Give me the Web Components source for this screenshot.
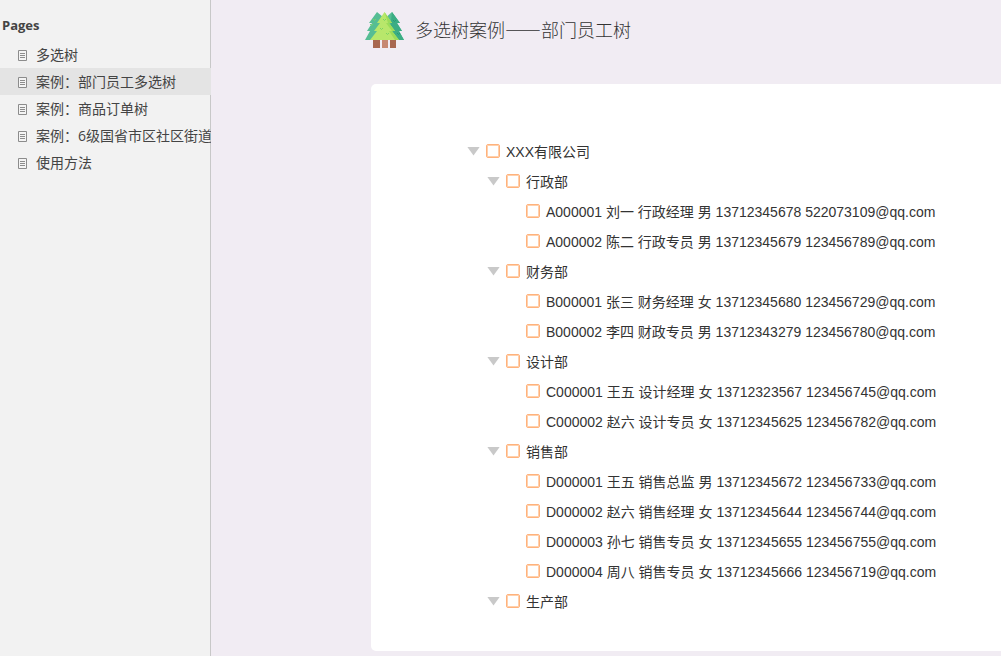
<!DOCTYPE html>
<html lang="zh-CN">
<head>
<meta charset="utf-8">
<meta name="viewport" content="width=device-width, initial-scale=1">
<title>多选树案例</title>
<style>
  body { margin: 0; color: #333; font: 14px/20px "Liberation Sans", "Noto Sans CJK SC", sans-serif; }
</style>
</head>
<body>
<app-shell>
  <page-list slot="nav" heading="Pages">
    <page-link>多选树</page-link>
    <page-link selected>案例：部门员工多选树</page-link>
    <page-link>案例：商品订单树</page-link>
    <page-link>案例：6级国省市区社区街道</page-link>
    <page-link>使用方法</page-link>
  </page-list>
  <page-header>多选树案例——部门员工树</page-header>
  <tree-card>
    <tree-node label="XXX有限公司">
      <tree-node label="行政部">
        <tree-node leaf label="A000001 刘一 行政经理 男 13712345678 522073109@qq.com"></tree-node>
        <tree-node leaf label="A000002 陈二 行政专员 男 13712345679 123456789@qq.com"></tree-node>
      </tree-node>
      <tree-node label="财务部">
        <tree-node leaf label="B000001 张三 财务经理 女 13712345680 123456729@qq.com"></tree-node>
        <tree-node leaf label="B000002 李四 财政专员 男 13712343279 123456780@qq.com"></tree-node>
      </tree-node>
      <tree-node label="设计部">
        <tree-node leaf label="C000001 王五 设计经理 女 13712323567 123456745@qq.com"></tree-node>
        <tree-node leaf label="C000002 赵六 设计专员 女 13712345625 123456782@qq.com"></tree-node>
      </tree-node>
      <tree-node label="销售部">
        <tree-node leaf label="D000001 王五 销售总监 男 13712345672 123456733@qq.com"></tree-node>
        <tree-node leaf label="D000002 赵六 销售经理 女 13712345644 123456744@qq.com"></tree-node>
        <tree-node leaf label="D000003 孙七 销售专员 女 13712345655 123456755@qq.com"></tree-node>
        <tree-node leaf label="D000004 周八 销售专员 女 13712345666 123456719@qq.com"></tree-node>
      </tree-node>
      <tree-node label="生产部"></tree-node>
    </tree-node>
  </tree-card>
</app-shell>

<template id="app-shell">
  <style>
    :host { display: grid; grid-template-columns: 211px minmax(0, 1fr); min-height: 100vh; background: #f1ecf3; }
    aside { box-sizing: border-box; min-width: 0; background: #f2f2f2; border-right: 1px solid #c8c8c8; }
    main { min-width: 0; overflow: hidden; padding: 0 0 5px 160px; }
  </style>
  <aside><slot name="nav"></slot></aside>
  <main><slot></slot></main>
</template>

<template id="page-list">
  <style>
    :host { display: block; padding-top: 10px; color: #444; }
    h2 { margin: 0 0 1px 2px; font: bold 13px/30px "Open Sans", sans-serif; }
    nav { margin-right: -1px; }
  </style>
  <h2></h2>
  <nav><slot></slot></nav>
</template>

<template id="page-link">
  <style>
    :host { display: block; font-family: "Open Sans", "Noto Sans CJK SC", sans-serif; }
    a { display: flex; align-items: center; gap: 9px; height: 27px; padding-left: 18px; color: inherit; text-decoration: none; white-space: nowrap; overflow: hidden; }
    :host([selected]) a { background: #e4e4e4; }
    svg { flex: none; }
  </style>
  <a href="#">
    <svg width="9" height="13" viewBox="0 -2 9 13" aria-hidden="true">
      <path d="M.5.5h8v10h-8z" fill="#f4f4f4" stroke="#8c8c8c"/>
      <path d="M2 3.5h5M2 5.5h5M2 7.5h5" stroke="#8c8c8c"/>
    </svg>
    <span><slot></slot></span>
  </a>
</template>

<template id="page-header">
  <style>
    :host { display: flex; align-items: flex-start; gap: 10px; height: 74px; padding-top: 10px; margin-left: -6px; }
    h1 { margin: 0; font: 300 18px/38px "Noto Sans CJK SC", sans-serif; color: #333; white-space: nowrap; }
  </style>
  <svg width="40" height="40" viewBox="0 0 40 40" aria-hidden="true">
    <path d="M8 30h7v8H8zM25 30h6v8h-6z" fill="#a8674f"/>
    <path d="M17 30h6v8h-6z" fill="#c78872"/>
    <path d="M12 2 4 13h3L2 21h3L0 30h24V12z" fill="#56bd94"/>
    <path d="M27 2 18 10v20h21l-5-9h3l-5-8h3z" fill="#56bd94"/>
    <path d="m27 2 8 11h-3l5 8h-3l5 9h-9l-5-10z" fill="#3bad84"/>
    <path d="M19.500 2 12 13h3L9 21h3L5 30h29l-7-9h3l-6-8h3z" fill="#b8e76b"/>
    <path d="M19.500 2 27 13h-3l6 8h-3l7 9h-4l-6-9h3l-6-8h2z" fill="#9bdd59"/>
    <path d="m8 9 1.500 1.500L11 9M5 14l1.500 1.500L8 14M18 9l1.500 1.500L21 9M15 18l1.500 1.500L18 18M21 23l1.500 1.500L24 23" fill="none" stroke="#7bd363"/>
    <path d="m28 10 1.500 1.500L31 10M32 23l1.500 1.500L35 23" fill="none" stroke="#249b78"/>
  </svg>
  <h1><slot></slot></h1>
</template>

<template id="tree-card">
  <style>
    :host { display: block; padding: 52px 0 35px 96px; background: #fff; border-radius: 5px 0 0 5px; }
  </style>
  <slot></slot>
</template>

<template id="tree-node">
  <style>
    :host { display: block; }
    .row { display: flex; align-items: center; gap: 6px; height: 30px; }
    button { flex: none; width: 13px; height: 9px; padding: 0; border: 0; background: #c9c9c9; clip-path: polygon(0 0, 100% 0, 50% 100%); cursor: pointer; }
    :host([leaf]) button { visibility: hidden; }
    :host([collapsed]) button { transform: rotate(-90deg); }
    :host([collapsed]) .children { display: none; }
    input { appearance: none; flex: none; box-sizing: border-box; width: 14px; height: 14px; margin: 0; border: 1px solid #ffb27c; border-radius: 2px; background: #fff; box-shadow: inset 0 0 0 1px #ffd0ac; }
    input:checked { background: #ffb27c; }
    label { padding-top: 2px; white-space: nowrap; line-height: 20px; }
    .children { padding-left: 20px; }
  </style>
  <div class="row">
    <button type="button" aria-label="展开或收起"></button>
    <input type="checkbox" id="check">
    <label for="check"></label>
  </div>
  <div class="children"><slot></slot></div>
</template>

<script>
  class TemplateElement extends HTMLElement {
    constructor() {
      super();
      const template = document.getElementById(this.localName);
      this.attachShadow({ mode: "open" }).append(template.content.cloneNode(true));
    }
  }

  class PageList extends TemplateElement {
    connectedCallback() {
      this.shadowRoot.querySelector("h2").textContent = this.getAttribute("heading");
    }
  }

  class TreeNode extends TemplateElement {
    connectedCallback() {
      const root = this.shadowRoot;
      root.querySelector("label").textContent = this.getAttribute("label");
      root.querySelector("button").onclick = () => this.toggleAttribute("collapsed");
      root.querySelector("input").onchange = (event) => this.setChecked(event.target.checked);
    }
    setChecked(checked) {
      this.shadowRoot.querySelector("input").checked = checked;
      for (const child of this.children) child.setChecked(checked);
    }
  }

  customElements.define("app-shell", class extends TemplateElement {});
  customElements.define("page-list", PageList);
  customElements.define("page-link", class extends TemplateElement {});
  customElements.define("page-header", class extends TemplateElement {});
  customElements.define("tree-card", class extends TemplateElement {});
  customElements.define("tree-node", TreeNode);
</script>
</body>
</html>
